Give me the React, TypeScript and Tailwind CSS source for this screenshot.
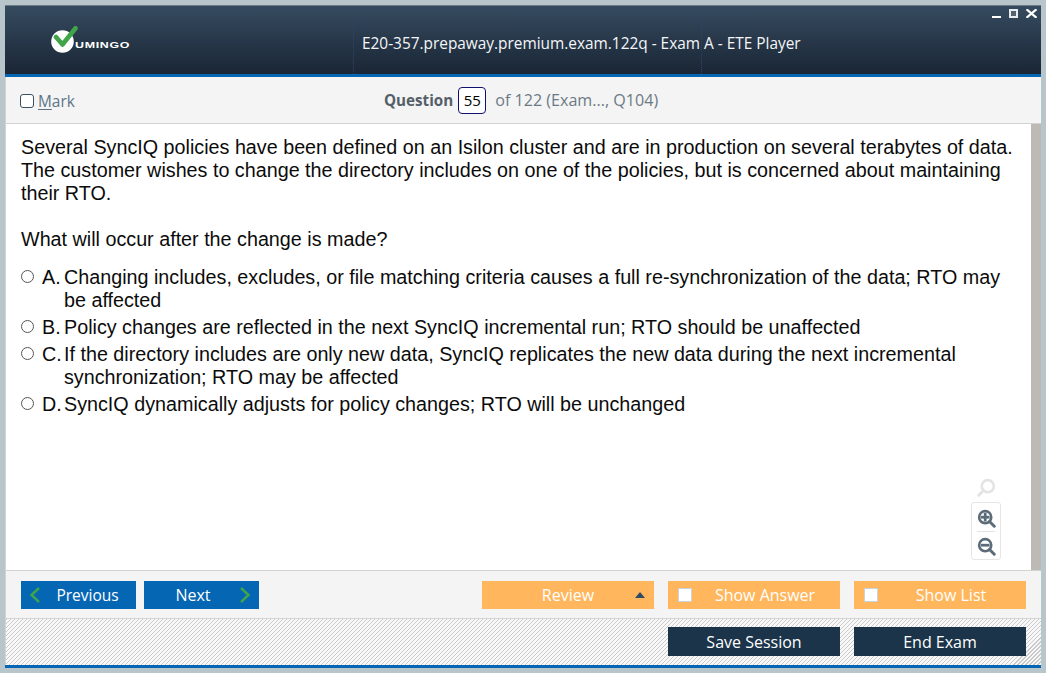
const uiFont = "font-['Open_Sans','Noto_Sans',sans-serif]";

const options = [
  { letter: "A.", text: "Changing includes, excludes, or file matching criteria causes a full re-synchronization of the data; RTO may be affected" },
  { letter: "B.", text: "Policy changes are reflected in the next SyncIQ incremental run; RTO should be unaffected" },
  { letter: "C.", text: "If the directory includes are only new data, SyncIQ replicates the new data during the next incremental synchronization; RTO may be affected" },
  { letter: "D.", text: "SyncIQ dynamically adjusts for policy changes; RTO will be unchanged" },
];

function Logo() {
  return (
    <div className="flex items-end">
      <svg width="27" height="27" viewBox="0 0 27 27">
        <circle cx="11.5" cy="15.5" r="11.3" fill="#ffffff" />
        <path d="M5 11 L11.5 18.5 L24.5 2.2" fill="none" stroke="#3fa548" strokeWidth="4.6" strokeLinecap="round" strokeLinejoin="round" />
      </svg>
      <span className="-ml-[3px] mb-[3px] origin-left scale-x-[1.38] font-['Liberation_Sans',sans-serif] text-[9px] leading-[9px] font-bold tracking-[0.5px] text-white">UMINGO</span>
    </div>
  );
}

function Magnifier({ kind, color }: { kind: "plain" | "plus" | "minus"; color: string }) {
  return (
    <svg width="19" height="19" viewBox="0 0 22 22" className={kind === "plain" ? "-scale-x-100" : ""}>
      <circle cx="9.5" cy="9.5" r="7" fill={kind === "plain" ? "none" : "#ffffff"} stroke={color} strokeWidth="3" />
      <path d="M14.5 14.5 L20 20" stroke={color} strokeWidth="3.4" strokeLinecap="round" />
      {kind !== "plain" && <path d="M4.5 9.5 H14.5" stroke={color} strokeWidth="3.2" />}
      {kind === "plus" && <path d="M9.5 4.5 V14.5" stroke={color} strokeWidth="3.2" />}
    </svg>
  );
}

function OrangeButton({ label, check, caret }: { label: string; check?: boolean; caret?: boolean }) {
  return (
    <button className={`relative flex h-[28px] w-[172px] items-center justify-center bg-[#ffb65c] text-[16px] text-white ${check ? "pl-[22px]" : ""}`}>
      {check && <span className="absolute left-[10px] top-[7px] h-[14px] w-[14px] border border-[#c9d3dc] bg-white" />}
      {label}
      {caret && <span className="absolute right-[9px] top-[11px] h-0 w-0 border-x-[5px] border-b-[6px] border-x-transparent border-b-[#2f4a63]" />}
    </button>
  );
}

export default function App() {
  return (
    <div className={`h-[673px] w-[1046px] overflow-hidden bg-[#b8c5cb] pl-[5px] pt-[5px] ${uiFont}`}>
      <div className="flex h-[663px] w-[1036px] flex-col border-t border-[#6f7b84]">
        {/* title bar */}
        <header className="relative grid h-[68px] shrink-0 grid-cols-[348px_348px_1fr] bg-gradient-to-b from-[#364b60] to-[#1a2635]">
          <div className="flex items-start pl-[46px] pt-[20px]">
            <Logo />
          </div>
          <div className="border-l border-dotted border-[#2e4468] pl-[8px] pt-[25px]">
            <span className="whitespace-nowrap text-[15.4px] leading-[20px] font-medium text-[#f4f6f8]">E20-357.prepaway.premium.exam.122q - Exam A - ETE Player</span>
          </div>
          <div className="border-l border-dotted border-[#2e4468]" />
          <div className="absolute right-[4px] top-[3px] flex items-start gap-[8px]">
            <span className="mt-[7px] h-[2px] w-[9px] bg-white" />
            <span className="h-[9px] w-[9px] border-2 border-[#e8ecef] bg-[#56636f]" />
            <svg width="11" height="9" viewBox="0 0 11 9">
              <path d="M0.5 0.2 L10.5 8.8 M10.5 0.2 L0.5 8.8" stroke="#ffffff" strokeWidth="2.2" />
            </svg>
          </div>
        </header>
        <div className="h-[3px] shrink-0 bg-[#0566b3]" />

        {/* question toolbar */}
        <div className="flex h-[47px] shrink-0 items-center border-b border-l border-[#d3d3d3] bg-[#f4f4f4]">
          <div className="flex w-[378px] items-center pl-[14px] pt-[3px] text-[15.4px] text-[#5c7488]">
            <span className="h-[14px] w-[14px] rounded-[3px] border border-[#3d4f63] bg-white" />
            <span className="ml-[4px]"><span className="underline underline-offset-2">M</span>ark</span>
          </div>
          <span className="text-[15.2px] font-bold text-[#545f69]">Question</span>
          <span className="ml-[5px] flex h-[27px] w-[28px] items-center justify-center rounded-[4px] border border-[#10106e] bg-white text-[15px] text-black">55</span>
          <span className="ml-[9px] text-[16.1px] text-[#6c7a86]">of 122 (Exam..., Q104)</span>
        </div>

        {/* question body */}
        <div className="flex min-h-0 flex-1 border-l border-[#d3d3d3]">
          <main className="relative flex-1 bg-white pl-[15px] pr-[14px] pt-[12px] font-['Liberation_Sans',sans-serif] text-[19.74px] leading-[23px] text-[#0b0b0b]">
            <p>Several SyncIQ policies have been defined on an Isilon cluster and are in production on several terabytes of data. The customer wishes to change the directory includes on one of the policies, but is concerned about maintaining their RTO.</p>
            <p className="mt-[23px]">What will occur after the change is made?</p>
            <ul className="mt-[15px] flex flex-col gap-[4px]">
              {options.map((o) => (
                <li key={o.letter} className="flex">
                  <span className="mt-[4px] h-[13px] w-[13px] shrink-0 rounded-full border border-[#555] bg-white" />
                  <span className="ml-[8px] w-[22px] shrink-0">{o.letter}</span>
                  <span className="pr-[16px]">{o.text}</span>
                </li>
              ))}
            </ul>
            <div className="absolute bottom-[10px] right-[30px] flex flex-col items-center">
              <div className="mb-[5px]"><Magnifier kind="plain" color="#e3e3e3" /></div>
              <div className="flex w-[30px] flex-col items-center rounded-[3px] border border-[#e6e6e6] bg-white pb-[3px] pt-[6px]">
                <Magnifier kind="plus" color="#5b6b78" />
                <div className="mb-[5px] mt-[3px] h-px w-[18px] bg-[#e3e3e3]" />
                <Magnifier kind="minus" color="#5b6b78" />
              </div>
            </div>
          </main>
          <div className="w-[10px] shrink-0 bg-[#bdb9b4]" />
        </div>

        {/* navigation */}
        <div className="flex h-[48px] shrink-0 items-center justify-between border-l border-t border-[#d3d3d3] bg-[#f4f4f4] pl-[15px] pr-[15px]">
          <div className="flex gap-[8px]">
            <button className="relative flex h-[28px] w-[115px] items-center justify-center bg-[#0566b3] pl-[18px] pt-[2px] text-[15.5px] text-white">
              <svg className="absolute left-[8px] top-[6px]" width="12" height="16" viewBox="0 0 12 16">
                <path d="M10 1 L2.5 8 L10 15" fill="none" stroke="#3fa548" strokeWidth="2.4" />
              </svg>
              Previous
            </button>
            <button className="relative flex h-[28px] w-[115px] items-center justify-center bg-[#0566b3] pr-[17px] text-[16px] text-white">
              Next
              <svg className="absolute right-[8px] top-[6px]" width="12" height="16" viewBox="0 0 12 16">
                <path d="M2 1 L9.5 8 L2 15" fill="none" stroke="#3fa548" strokeWidth="2.4" />
              </svg>
            </button>
          </div>
          <div className="flex gap-[14px]">
            <OrangeButton label="Review" caret />
            <OrangeButton label="Show Answer" check />
            <OrangeButton label="Show List" check />
          </div>
        </div>

        {/* session actions */}
        <div className="flex h-[47px] shrink-0 items-start justify-end gap-[14px] border-l border-t border-[#d3d3d3] bg-[repeating-linear-gradient(135deg,#cacaca_0px,#cacaca_1px,#f8f8f8_1px,#f8f8f8_2.83px)] pr-[15px] pt-[8px]">
          <button className="h-[29px] w-[172px] bg-[#1b344a] text-[16px] text-white">Save Session</button>
          <button className="h-[29px] w-[172px] bg-[#1b344a] text-[16px] text-white">End Exam</button>
        </div>
        <div className="h-[3px] shrink-0 bg-[#0566b3]" />
      </div>
    </div>
  );
}
